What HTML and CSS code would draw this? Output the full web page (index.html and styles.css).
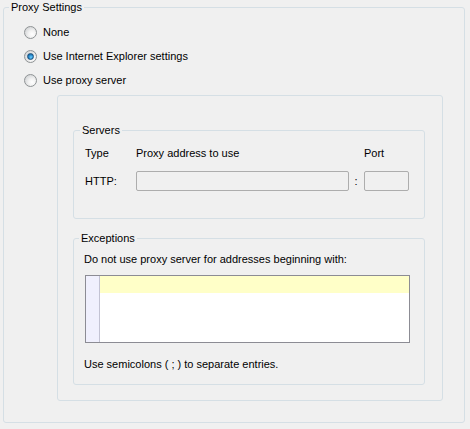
FILE: index.html
```html
<!DOCTYPE html>
<html>
<head>
<meta charset="utf-8">
<link rel="stylesheet" href="styles.css">
</head>
<body>
<fieldset class="group outer">
  <legend>Proxy Settings</legend>
  <div class="outer-body">
    <div class="radio-row">
      <span class="radio"></span><span>None</span>
    </div>
    <div class="radio-row">
      <span class="radio checked"></span><span>Use Internet Explorer settings</span>
    </div>
    <div class="radio-row">
      <span class="radio"></span><span>Use proxy server</span>
    </div>
    <div class="panel">
      <fieldset class="group servers">
        <legend>Servers</legend>
        <div class="server-grid">
          <span>Type</span>
          <span>Proxy address to use</span>
          <span></span>
          <span>Port</span>
          <span>HTTP:</span>
          <span class="input addr"></span>
          <span class="colon">:</span>
          <span class="input port"></span>
        </div>
      </fieldset>
      <fieldset class="group exceptions">
        <legend>Exceptions</legend>
        <div class="exc-body">
          <div class="line">Do not use proxy server for addresses beginning with:</div>
          <div class="editor">
            <div class="gutter"></div>
            <div class="edit-area"><div class="current-line"></div></div>
          </div>
          <div class="line note">Use semicolons ( ; ) to separate entries.</div>
        </div>
      </fieldset>
    </div>
  </div>
</fieldset>
</body>
</html>
```

FILE: styles.css
```css
html, body {
  margin: 0;
  padding: 0;
  background: #f0f0f0;
}
body {
  font-family: "Liberation Sans", Arial, sans-serif;
  font-size: 11px;
  line-height: 14px;
  color: #000;
  width: 470px;
  height: 429px;
  overflow: hidden;
}
.group {
  box-sizing: border-box;
  border: 1px solid #d5dfe5;
  border-radius: 3px;
  margin: 0;
  padding: 0;
  min-width: 0;
}
.group > legend {
  padding: 0 2px;
  margin-left: 5px;
  line-height: 14px;
}
.servers > legend {
  margin-left: 6px;
}
.outer {
  margin-left: 3px;
  width: 462px;
  height: 423px;
}
.outer-body {
  padding: 6px 0 0 20px;
}
.radio-row {
  display: flex;
  align-items: center;
  height: 24px;
}
.radio {
  box-sizing: border-box;
  width: 13px;
  height: 13px;
  border-radius: 50%;
  border: 1px solid #8f9395;
  background: radial-gradient(circle at 65% 65%, #ffffff 0%, #f2f2f2 35%, #d2d4d6 80%, #c6c8ca 100%);
  margin-right: 6px;
  position: relative;
  flex: none;
}
.radio.checked::after {
  content: "";
  position: absolute;
  left: 2px;
  top: 2px;
  width: 7px;
  height: 7px;
  border-radius: 50%;
  box-sizing: border-box;
  border: 1px solid #1b4f7a;
  background: radial-gradient(circle at 60% 65%, #6fd0ff 0%, #2b8fd1 45%, #0c4a82 100%);
}
.panel {
  box-sizing: border-box;
  margin: 3px 0 0 33px;
  width: 386px;
  height: 306px;
  border: 1px solid #d5dfe5;
  border-radius: 3px;
  padding: 27px 0 0 15px;
}
.servers {
  width: 352px;
  height: 96px;
}
.server-grid {
  padding: 9px 0 0 11px;
  display: grid;
  grid-template-columns: 51px 213px 15px 45px;
  grid-template-rows: 14px 20px;
  row-gap: 11px;
  align-items: center;
}
.input {
  box-sizing: border-box;
  height: 20px;
  border: 1px solid #adadad;
  border-radius: 2px;
  background: #f0f0f0;
}
.colon {
  text-align: center;
  padding-right: 1px;
}
.exceptions {
  margin-top: 12px;
  width: 352px;
  height: 154px;
}
.exc-body {
  padding: 7px 0 0 10px;
}
.editor {
  box-sizing: border-box;
  margin: 9px 0 0 1px;
  width: 325px;
  height: 68px;
  border: 1px solid #8c8c94;
  display: flex;
  background: #fff;
}
.gutter {
  width: 13px;
  background: #f0f0fd;
  border-right: 1px solid #c3c3d3;
}
.edit-area {
  flex: 1;
}
.current-line {
  height: 17px;
  background: #ffffc8;
}
.note {
  margin-top: 14px;
}
```
